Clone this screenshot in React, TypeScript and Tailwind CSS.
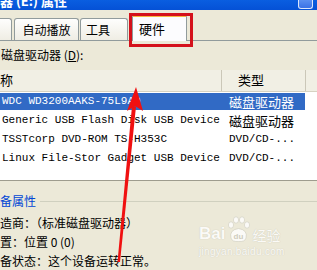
import React from "react";

const rows = [
  { name: "WDC WD3200AAKS-75L9A0", type: "磁盘驱动器", sel: true, cjk: true },
  { name: "Generic USB Flash Disk USB Device", type: "磁盘驱动器", sel: false, cjk: true },
  { name: "TSSTcorp DVD-ROM TS-H353C", type: "DVD/CD-...", sel: false, cjk: false },
  { name: "Linux File-Stor Gadget USB Device", type: "DVD/CD-...", sel: false, cjk: false },
];

export default function App() {
  return (
    <div className="relative w-[317px] h-[270px] overflow-hidden bg-[#ece9d8] font-['Noto_Sans_CJK_SC',sans-serif] text-[12px] text-black">
      {/* title bar */}
      <div className="h-[10px] bg-gradient-to-b from-[#0a5ee0] to-[#0551d6] flex justify-between overflow-hidden">
        <div className="-mt-[8px] text-white font-bold text-[13px] leading-[17px] whitespace-nowrap">
          器 (E:) 属性
        </div>
        <div className="mr-[4px] w-[15px] h-[9px] rounded-b-[3px] border border-t-0 border-[#dbe6fb] bg-gradient-to-b from-[#5a8ff0] to-[#3a72e6]" />
      </div>

      {/* tab strip */}
      <div className="h-[31px] flex items-end border-b border-[#919b9c]">
        <div className="w-[12px] h-[22px] border-r border-t border-[#919b9c] rounded-tr-[3px] bg-gradient-to-b from-[#fefefd] to-[#efede4]" />
        <div className="ml-[2px] w-[65px] h-[22px] border border-b-0 border-[#919b9c] rounded-t-[3px] bg-gradient-to-b from-[#fefefd] to-[#efede4] flex items-center justify-center leading-none text-[12px]">
          自动播放
        </div>
        <div className="ml-[1px] w-[48px] h-[22px] border border-b-0 border-[#919b9c] rounded-t-[3px] bg-gradient-to-b from-[#fefefd] to-[#efede4] flex items-center pl-[5px] leading-none text-[12px]">
          工具
        </div>
        <div className="ml-[4px] w-[55px] h-[27px] -mb-[1px] border border-b-0 border-[#919b9c] border-t-[3px] border-t-[#f5b941] rounded-t-[3px] bg-[#fcfcfe] flex items-start pt-[5px] pl-[6px] leading-none text-[13px]">
          硬件
        </div>
      </div>

      {/* label */}
      <div className="mt-[7px] h-[14px] leading-[14px] pl-[1px] whitespace-nowrap">
        磁盘驱动器 (<span className="underline">D</span>):
      </div>

      {/* list */}
      <div className="mt-[8px] border-b border-[#9e9c8e]">
        <div className="h-[22px] flex bg-[#f1efe4] border-b border-[#d6d2c2] text-[13px] leading-[20px]">
          <div className="w-[222px] border-r border-[#cbc7b8]">称</div>
          <div className="w-[84px] border-r border-[#cbc7b8] pl-[16px]">类型</div>
          <div className="flex-1" />
        </div>
        <div className="bg-white h-[88px]">
          {rows.map((r) => (
            <div key={r.name} className="h-[19px] flex items-center">
              <div
                className={
                  r.sel
                    ? "h-[17px] w-[305px] flex items-center bg-[#316ac5] text-white"
                    : "h-[17px] w-[305px] flex items-center"
                }
              >
                <div className="w-[229px] pl-[2px] font-['Liberation_Mono',monospace] text-[11px] whitespace-nowrap overflow-hidden">
                  {r.name}
                </div>
                <div
                  className={
                    r.cjk
                      ? "text-[13px] leading-none whitespace-nowrap"
                      : "font-['Liberation_Mono',monospace] text-[11px] whitespace-nowrap"
                  }
                >
                  {r.type}
                </div>
              </div>
            </div>
          ))}
        </div>
      </div>

      {/* group box */}
      <div className="mt-[13px] flex items-center h-[14px]">
        <div className="text-[#0046d5] text-[12px] leading-[14px] whitespace-nowrap">备属性</div>
        <div className="ml-[4px] flex-1 h-px bg-[#d0d0bf]" />
      </div>
      <div className="mt-[5px] flex flex-col leading-[19px] whitespace-nowrap">
        <div>造商：（标准磁盘驱动器）</div>
        <div>置：位置 0 (0)</div>
        <div>备状态：这个设备运转正常。</div>
      </div>

      {/* red box annotation */}
      <div className="absolute left-[129px] top-[13px] w-[64px] h-[34px] border-[3px] border-[#d4111b]" />

      {/* watermark */}
      <div className="absolute left-[199px] top-[215px] flex flex-col items-start text-white opacity-80 pointer-events-none">
        <div className="flex items-end h-[28px]">
          <span className="font-['Liberation_Sans',sans-serif] font-bold text-[17px] leading-[18px] [text-shadow:0_0_1px_#b8b6a8]">Bai</span>
          <svg width="25" height="27" viewBox="0 0 25 27" className="ml-[1px]">
            <g fill="#fff" stroke="#c8c6b8" strokeWidth="0.6">
              <ellipse cx="5" cy="9" rx="2.6" ry="3.2" />
              <ellipse cx="10" cy="4" rx="2.6" ry="3.2" />
              <ellipse cx="16" cy="4" rx="2.6" ry="3.2" />
              <ellipse cx="21" cy="9" rx="2.6" ry="3.2" />
              <path d="M5 22 Q3 14 12.5 12.5 Q22 14 20 22 Q19 26 12.5 25.5 Q6 26 5 22 Z" />
            </g>
            <text x="12.5" y="22.5" textAnchor="middle" fontSize="8" fontWeight="bold" fill="#c8c6b8" fontFamily="Liberation Sans, sans-serif">du</text>
          </svg>
          <span className="ml-[1px] text-[14px] leading-[16px] [text-shadow:0_0_1px_#b8b6a8]">经验</span>
        </div>
        <div className="font-['Liberation_Sans',sans-serif] text-[10px] leading-[12px] mt-[3px] tracking-[0.3px] [text-shadow:0_0_1px_#b8b6a8]">
          jingyan.baidu.com
        </div>
      </div>

      {/* red arrow */}
      <svg className="absolute left-0 top-0 pointer-events-none" width="317" height="270" viewBox="0 0 317 270">
        <polygon points="132,106 136,106.5 120,262 117.5,262" fill="#f01010" />
        <polygon points="136,87 143,111 135,106 127,111" fill="#f01010" />
      </svg>
    </div>
  );
}
